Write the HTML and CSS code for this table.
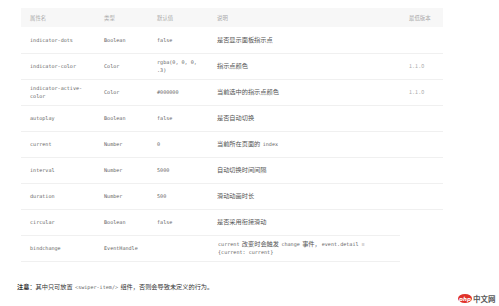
FILE: index.html
```html
<!DOCTYPE html>
<html lang="zh-CN">
<head>
    <meta charset="UTF-8">
    <meta name="viewport" content="width=device-width, initial-scale=1.0">
    <title>swiper 属性</title>
    <link rel="stylesheet" href="styles.css">
</head>
<body>
    <div class="page">
        <table class="props">
            <thead>
                <tr>
                    <th class="col-name">属性名</th>
                    <th class="col-type">类型</th>
                    <th class="col-default">默认值</th>
                    <th class="col-desc">说明</th>
                    <th class="col-ver">最低版本</th>
                </tr>
            </thead>
            <tbody>
                <tr>
                    <td class="code">indicator-dots</td>
                    <td class="code">Boolean</td>
                    <td class="code">false</td>
                    <td>是否显示面板指示点</td>
                    <td class="ver"></td>
                </tr>
                <tr>
                    <td class="code">indicator-color</td>
                    <td class="code">Color</td>
                    <td class="code">rgba(0, 0, 0, .3)</td>
                    <td>指示点颜色</td>
                    <td class="ver">1.1.0</td>
                </tr>
                <tr>
                    <td class="code">indicator-active-color</td>
                    <td class="code">Color</td>
                    <td class="code">#000000</td>
                    <td>当前选中的指示点颜色</td>
                    <td class="ver">1.1.0</td>
                </tr>
                <tr>
                    <td class="code">autoplay</td>
                    <td class="code">Boolean</td>
                    <td class="code">false</td>
                    <td>是否自动切换</td>
                    <td class="ver"></td>
                </tr>
                <tr>
                    <td class="code">current</td>
                    <td class="code">Number</td>
                    <td class="code">0</td>
                    <td>当前所在页面的 <code>index</code></td>
                    <td class="ver"></td>
                </tr>
                <tr>
                    <td class="code">interval</td>
                    <td class="code">Number</td>
                    <td class="code">5000</td>
                    <td>自动切换时间间隔</td>
                    <td class="ver"></td>
                </tr>
                <tr>
                    <td class="code">duration</td>
                    <td class="code">Number</td>
                    <td class="code">500</td>
                    <td>滑动动画时长</td>
                    <td class="ver"></td>
                </tr>
                <tr>
                    <td class="code">circular</td>
                    <td class="code">Boolean</td>
                    <td class="code">false</td>
                    <td>是否采用衔接滑动</td>
                </tr>
                <tr>
                    <td class="code">bindchange</td>
                    <td class="code">EventHandle</td>
                    <td class="code"></td>
                    <td class="desc-long"><code>current</code> 改变时会触发 <code>change</code> 事件，<code>event.detail =</code> <code>{current: current}</code></td>
                </tr>
            </tbody>
        </table>

        <p class="note"><strong>注意</strong>：其中只可放置 <code>&lt;swiper-item/&gt;</code> 组件，否则会导致未定义的行为。</p>
    </div>

    <div class="watermark">
        <span class="php-badge">php</span>
        <span class="site-name">中文网</span>
    </div>
</body>
</html>
```

FILE: styles.css
```css
* {
    margin: 0;
    padding: 0;
    box-sizing: border-box;
}

body {
    background-color: #fff;
    font-family: "Noto Sans CJK SC", "Noto Sans", sans-serif;
    color: #555;
}

.page {
    padding: 8px 0 0 21px;
}

.props {
    border-collapse: collapse;
    table-layout: fixed;
    width: 422px;
}

.props th {
    height: 19px;
    padding: 0 9px;
    background-color: #f7f7f7;
    color: #aaa;
    font-size: 5.4px;
    font-weight: normal;
    text-align: left;
    vertical-align: middle;
}

.col-name { width: 74px; }
.col-type { width: 53px; }
.col-default { width: 60px; }
.col-desc { width: 192px; }
.col-ver { width: 43px; }

.props td {
    height: 26px;
    padding: 0 9px;
    border-bottom: 1px solid #f0f0f0;
    font-size: 6.2px;
    line-height: 8px;
    vertical-align: middle;
    word-break: break-word;
}

.props td.code,
code {
    font-family: "DejaVu Sans Mono", "Liberation Mono", monospace;
    font-size: 5.1px;
    line-height: 8px;
    color: #666;
}

code {
    margin: 0 1px;
}

.props td.ver {
    color: #aaa;
    font-size: 5.4px;
    letter-spacing: 0.8px;
}

.props td.desc-long {
    padding-right: 24px;
    line-height: 8.5px;
}

.note {
    margin: 20px 0 0 -4px;
    font-size: 6.2px;
    color: #333;
}

.note strong {
    font-weight: bold;
}

.watermark {
    position: absolute;
    left: 458px;
    top: 293px;
    display: flex;
    align-items: center;
    gap: 1px;
}

.php-badge {
    display: flex;
    align-items: center;
    justify-content: center;
    width: 14px;
    height: 9px;
    border-radius: 50%;
    background-color: #e0322a;
    color: #fff;
    font-family: "DejaVu Sans", sans-serif;
    font-size: 5.5px;
    font-weight: bold;
    font-style: italic;
}

.site-name {
    font-size: 7.5px;
    font-weight: bold;
    color: #5a5a5a;
}
```
